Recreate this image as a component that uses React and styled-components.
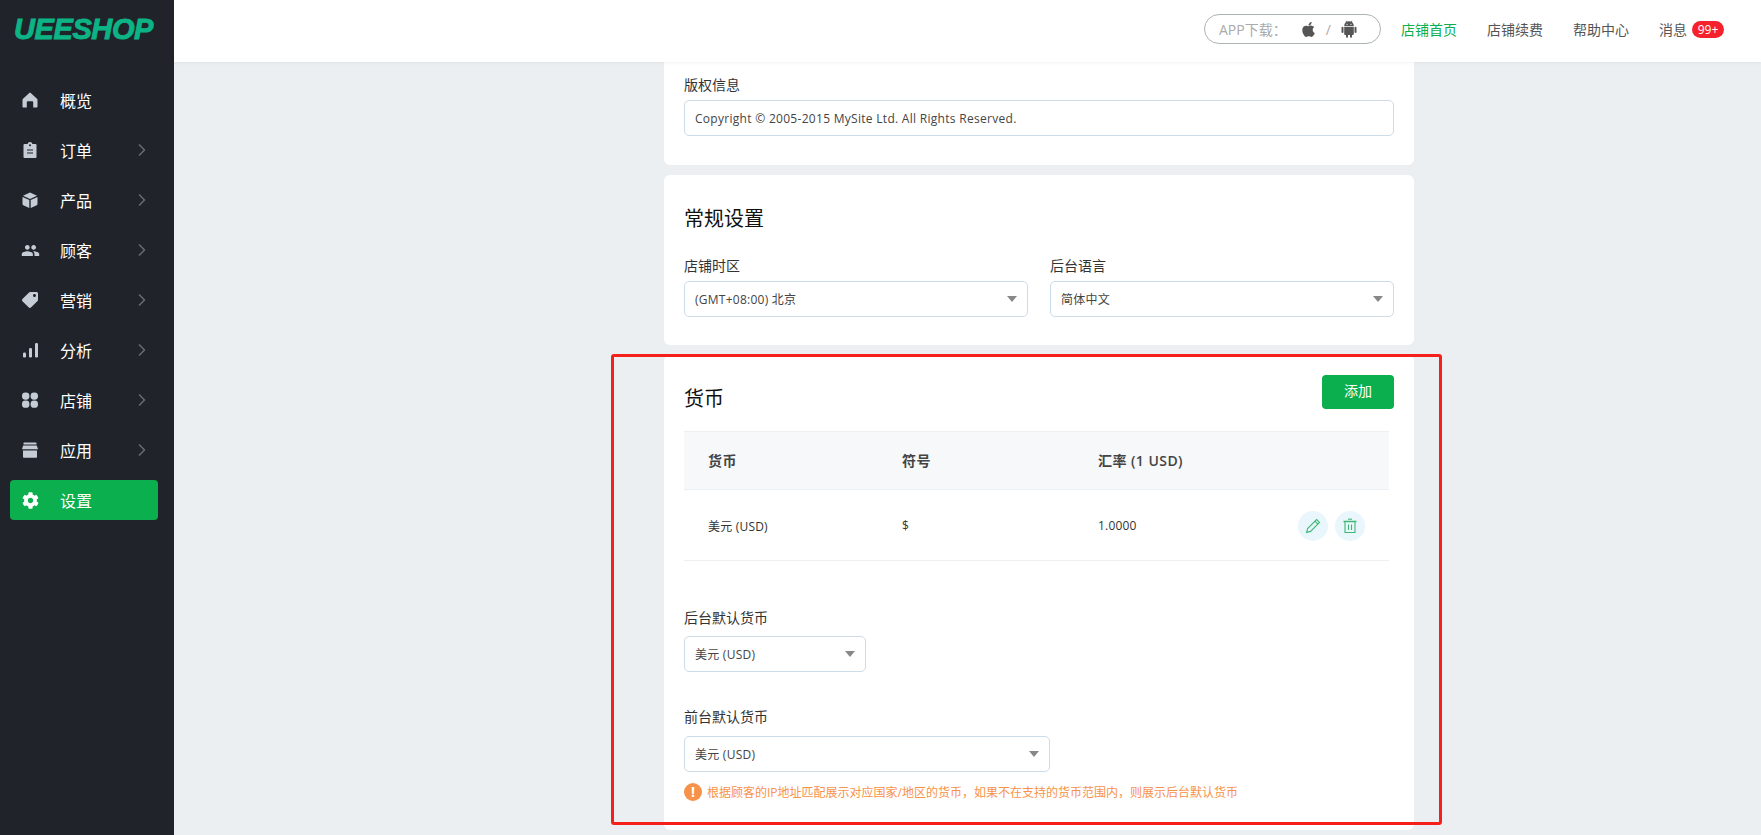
import styled, { createGlobalStyle } from "styled-components";
import { ChevronRight } from "lucide-react";
import { FaApple, FaCog, FaTag } from "react-icons/fa";
import { MdPeople } from "react-icons/md";

const GlobalStyle = createGlobalStyle`
  * { box-sizing: border-box; }
  html, body { margin: 0; height: 100%; }
  body {
    font-family: "Open Sans", "Noto Sans CJK SC", sans-serif;
    font-size: 12px;
    color: #333;
    background: #ebeff2;
    overflow: hidden;
  }
`;

const Layout = styled.div`
  display: flex;
  height: 100vh;
  position: relative;
  overflow: hidden;
`;

/* sidebar */
const Sidebar = styled.aside`
  width: 174px;
  flex: none;
  display: flex;
  flex-direction: column;
  background: #202329;
`;
const LogoBox = styled.div`
  height: 75px;
  padding: 12px 0 0 14px;
`;
const Logo = styled.div`
  font-family: "Liberation Sans", sans-serif;
  font-size: 29px;
  line-height: 34px;
  font-weight: 700;
  font-style: italic;
  letter-spacing: -0.4px;
  color: #0cb385;
  -webkit-text-stroke: 0.9px #0cb385;
`;
const NavItem = styled.div`
  display: flex;
  align-items: center;
  height: 40px;
  margin: 5px 16px 5px 10px;
  padding: 0 13px 0 12px;
  border-radius: 4px;
  background: ${(p) => (p.$active ? "#0baf4d" : "transparent")};
  color: #fff;
  font-size: 16px;
`;
const NavIcon = styled.span`
  width: 16px;
  height: 16px;
  display: flex;
  align-items: center;
  justify-content: center;
  color: ${(p) => (p.$active ? "#fff" : "#c5ccd6")};
  margin-right: 22px;
  svg {
    flex: none;
  }
`;
const NavText = styled.span`
  flex: 1;
`;
const Chevron = styled(ChevronRight)`
  color: #666b70;
  margin-right: -7px;
`;

/* top bar */
const Main = styled.div`
  flex: 1;
  min-width: 0;
  display: flex;
  flex-direction: column;
`;
const TopBar = styled.header`
  height: 62px;
  flex: none;
  display: flex;
  align-items: center;
  justify-content: flex-end;
  padding: 0 37px 4px 0;
  background: #fff;
  box-shadow: 0 1px 3px rgba(0, 0, 0, 0.05);
  position: relative;
  z-index: 1;
  font-size: 14px;
  color: #555;
`;
const AppPill = styled.div`
  width: 177px;
  height: 30px;
  display: flex;
  align-items: center;
  padding-left: 14px;
  border: 1px solid #adb3b5;
  border-radius: 15px;
  color: #aaa;
  margin-right: 19px;
`;
const PillIcons = styled.span`
  display: flex;
  align-items: center;
  margin-left: 13px;
  color: #555;
`;
const Slash = styled.span`
  margin: 0 10px 0 9px;
  color: #aaa;
  font-size: 14px;
`;
const TopLink = styled.span`
  margin-left: ${(p) => p.$gap || 30}px;
  color: ${(p) => (p.$active ? "#0baf4d" : "#555")};
`;
const Badge = styled.span`
  display: inline-block;
  width: 32px;
  height: 17px;
  margin-left: 5px;
  border-radius: 9px;
  background: #f5212d;
  color: #fff;
  font-size: 12px;
  line-height: 17px;
  text-align: center;
`;

/* cards */
const Content = styled.main`
  flex: 1;
  overflow: hidden;
  display: flex;
  flex-direction: column;
  gap: 10px;
  padding-left: 490px;
`;
const Card = styled.section`
  width: 750px;
  flex: none;
  background: #fff;
  border-radius: ${(p) => (p.$flush ? "0 0 6px 6px" : "6px")};
  padding: ${(p) => p.$top}px 20px ${(p) => p.$bottom}px;
`;
const Heading = styled.h2`
  margin: 10px 0 0;
  font-size: 20px;
  line-height: 28px;
  font-weight: 400;
  color: #111;
`;
const CardHead = styled.div`
  display: flex;
  justify-content: space-between;
  align-items: flex-start;
`;
const AddButton = styled.button`
  width: 72px;
  height: 34px;
  padding: 0 0 4px;
  border: 0;
  border-radius: 4px;
  background: #0baf4d;
  color: #fff;
  font: inherit;
  font-size: 14px;
`;
const Label = styled.div`
  font-size: 14px;
  line-height: 20px;
  color: #333;
  margin-bottom: ${(p) => p.$gap || 5}px;
`;
const Field = styled.div`
  margin-top: ${(p) => p.$top || 0}px;
  width: ${(p) => (p.$width ? p.$width + "px" : "auto")};
`;
const TextInput = styled.input`
  display: block;
  width: 100%;
  height: 36px;
  padding: 0 10px;
  border: 1px solid #ccdbe8;
  border-radius: 5px;
  font: inherit;
  font-size: 12px;
  letter-spacing: 0.29px;
  color: #444;
  outline: none;
`;
const SelectBox = styled.div`
  height: 36px;
  display: flex;
  align-items: center;
  justify-content: space-between;
  padding: 0 10px;
  border: 1px solid #ccdbe8;
  border-radius: 5px;
  font-size: 12px;
  letter-spacing: 0.25px;
  color: #444;
  background: #fff;
  &::after {
    content: "";
    border-left: 5px solid transparent;
    border-right: 5px solid transparent;
    border-top: 6px solid #888;
  }
`;
const TwoCols = styled.div`
  display: grid;
  grid-template-columns: 344px 344px;
  column-gap: 22px;
  margin-top: 23px;
`;

/* table */
const Table = styled.div`
  width: 705px;
  margin-top: 18px;
`;
const Row = styled.div`
  display: grid;
  grid-template-columns: 194px 196px 1fr auto;
  align-items: center;
  height: ${(p) => (p.$head ? 59 : 71)}px;
  padding: ${(p) => (p.$head ? "0 24px 2px" : "1px 24px 0")};
  border-bottom: 1px solid #edf0f3;
  letter-spacing: 0.2px;
  ${(p) =>
    p.$head &&
    `
    background: #f6f8fa;
    border-top: 1px solid #edf0f3;
    font-size: 14px;
    font-weight: 600;
    letter-spacing: 0.45px;
    color: #444;
  `}
`;
const Actions = styled.div`
  display: flex;
  gap: 7px;
`;
const RoundButton = styled.span`
  width: 30px;
  height: 30px;
  border-radius: 50%;
  background: #e9f6fc;
  display: flex;
  align-items: center;
  justify-content: center;
  color: #3fb873;
`;
const Hint = styled.div`
  display: flex;
  align-items: center;
  gap: 5px;
  margin-top: 11px;
  height: 18px;
  font-size: 12px;
  color: #f7924a;
`;
const HintIcon = styled.span`
  width: 18px;
  height: 18px;
  flex: none;
  border-radius: 50%;
  background: #f7924a;
  color: #fff;
  font-size: 14px;
  font-weight: 700;
  line-height: 18px;
  text-align: center;
`;

/* red annotation over the page */
const Annotation = styled.div`
  position: absolute;
  left: 611px;
  top: 354px;
  width: 831px;
  height: 471px;
  border: 3px solid #f5201a;
  border-radius: 3px;
  pointer-events: none;
`;

const HomeIcon = () => (
  <svg width="16" height="16" viewBox="0 0 16 16" fill="currentColor">
    <path d="M8 .8c.4 0 .7.100 1 .4l6 5.600c.4.400.5.700.5 1.200v6.500c0 .6-.4 1-1 1h-3.300V10.300a1 1 0 0 0-1-1H5.800a1 1 0 0 0-1 1v5.200H1.500c-.6 0-1-.4-1-1V8c0-.5.100-.8.500-1.200l6-5.600c.3-.3.600-.4 1-.4z" />
  </svg>
);
const AndroidIcon = () => (
  <svg width="16" height="18" viewBox="0 0 16 18" fill="currentColor">
    <path d="M3.200 6a4.800 4.800 0 0 1 9.600 0z" />
    <path d="M5 .8l1.200 2M11 .8L9.800 2.800" stroke="currentColor" strokeWidth=".8" />
    <path d="M3.200 6.800h9.600v7.200a1 1 0 0 1-1 1H4.200a1 1 0 0 1-1-1z" />
    <rect x="0.500" y="6.800" width="2" height="6.200" rx="1" />
    <rect x="13.500" y="6.800" width="2" height="6.200" rx="1" />
    <rect x="5" y="14" width="2" height="3.800" rx="1" />
    <rect x="9" y="14" width="2" height="3.800" rx="1" />
    <circle cx="6" cy="4.300" r=".6" fill="#fff" />
    <circle cx="10" cy="4.300" r=".6" fill="#fff" />
  </svg>
);
const ClipboardIcon = () => (
  <svg width="16" height="16" viewBox="0 0 16 16" fill="currentColor">
    <path d="M2.500 2h3a2.600 2.600 0 0 1 5 0h3a1 1 0 0 1 1 1V15a1 1 0 0 1-1 1h-11a1 1 0 0 1-1-1V3a1 1 0 0 1 1-1z" />
    <path d="M5 8h6M5 11h6" stroke="#202329" strokeWidth="1.200" />
    <circle cx="8" cy="3.200" r="1" fill="#202329" />
  </svg>
);
const BoxIcon = () => (
  <svg width="16" height="16" viewBox="0 0 16 16" fill="currentColor">
    <path d="M8 0.500l7 3.200-7 3.200-7-3.200z" />
    <path d="M.5 5l6.800 3.100V16L1.300 13.200a1.300 1.300 0 0 1-.8-1.100z" />
    <path d="M15.500 5L8.700 8.100V16l6-2.800a1.300 1.300 0 0 0 .8-1.100z" />
  </svg>
);
const BarsIcon = () => (
  <svg width="16" height="16" viewBox="0 0 16 16" fill="currentColor">
    <rect x="1" y="10.500" width="3" height="5" rx="1.200" />
    <rect x="7" y="6" width="3" height="9.500" rx="1.200" />
    <rect x="13" y="1" width="3" height="14.500" rx="1.200" />
  </svg>
);
const GridIcon = () => (
  <svg width="16" height="16" viewBox="0 0 16 16" fill="currentColor">
    <rect x="0" y="0.500" width="7.400" height="7.200" rx="3.400" />
    <rect x="8.600" y="0.500" width="7.400" height="7.200" rx="3.400" />
    <rect x="0" y="8.600" width="7.400" height="7.200" rx="3.400" />
    <rect x="8.600" y="8.600" width="7.400" height="7.200" rx="3.400" />
  </svg>
);
const StoreIcon = () => (
  <svg width="16" height="16" viewBox="0 0 16 16" fill="currentColor">
    <rect x="1.500" y="0.500" width="13" height="2" rx="0.500" />
    <path d="M1.200 3.500h13.600L16 7.200H0z" />
    <path d="M1 8.500h14V15a.8.800 0 0 1-.8.800H1.800A.8.800 0 0 1 1 15z" />
  </svg>
);
const PencilIcon = () => (
  <svg width="16" height="16" viewBox="0 0 16 16" fill="none" stroke="currentColor" strokeWidth="1.100">
    <path d="M11.600 1.500l2.900 2.900-9 9-3.900 1 1-3.900z" />
    <path d="M10 3.200l2.900 2.900" />
  </svg>
);
const TrashIcon = () => (
  <svg width="16" height="16" viewBox="0 0 16 16" fill="none" stroke="currentColor" strokeWidth="1.100">
    <path d="M1.500 3.500h13" strokeWidth="1.500" />
    <path d="M6 1.200h4" />
    <path d="M3 4v10.500h10V4" />
    <path d="M6.500 6.500v5.500M9.500 6.500v5.500" />
  </svg>
);

const menu = [
  { label: "概览", icon: <HomeIcon />, leaf: true },
  { label: "订单", icon: <ClipboardIcon /> },
  { label: "产品", icon: <BoxIcon /> },
  { label: "顾客", icon: <MdPeople size={19} /> },
  { label: "营销", icon: <FaTag size={16} style={{ transform: "scaleX(-1)" }} /> },
  { label: "分析", icon: <BarsIcon /> },
  { label: "店铺", icon: <GridIcon /> },
  { label: "应用", icon: <StoreIcon /> },
  { label: "设置", icon: <FaCog size={17} />, leaf: true, active: true },
];

export default function App() {
  return (
    <Layout>
      <GlobalStyle />
      <Sidebar>
        <LogoBox>
          <Logo>UEESHOP</Logo>
        </LogoBox>
        {menu.map((item) => (
          <NavItem key={item.label} $active={item.active}>
            <NavIcon $active={item.active}>{item.icon}</NavIcon>
            <NavText>{item.label}</NavText>
            {!item.leaf && <Chevron size={20} />}
          </NavItem>
        ))}
      </Sidebar>
      <Main>
        <TopBar>
          <AppPill>
            APP下载：
            <PillIcons>
              <FaApple size={17} />
              <Slash>/</Slash>
              <AndroidIcon />
            </PillIcons>
          </AppPill>
          <TopLink $active $gap={1}>店铺首页</TopLink>
          <TopLink>店铺续费</TopLink>
          <TopLink>帮助中心</TopLink>
          <TopLink>消息</TopLink>
          <Badge>99+</Badge>
        </TopBar>
        <Content>
          <Card $flush $top={13} $bottom={29}>
            <Label>版权信息</Label>
            <TextInput readOnly value="Copyright © 2005-2015 MySite Ltd. All Rights Reserved." />
          </Card>
          <Card $top={20} $bottom={28}>
            <Heading>常规设置</Heading>
            <TwoCols>
              <Field>
                <Label>店铺时区</Label>
                <SelectBox>(GMT+08:00) 北京</SelectBox>
              </Field>
              <Field>
                <Label>后台语言</Label>
                <SelectBox>简体中文</SelectBox>
              </Field>
            </TwoCols>
          </Card>
          <Card $top={20} $bottom={29}>
            <CardHead>
              <Heading>货币</Heading>
              <AddButton>添加</AddButton>
            </CardHead>
            <Table>
              <Row $head>
                <span>货币</span>
                <span>符号</span>
                <span>汇率 (1 USD)</span>
              </Row>
              <Row>
                <span>美元 (USD)</span>
                <span>$</span>
                <span>1.0000</span>
                <Actions>
                  <RoundButton><PencilIcon /></RoundButton>
                  <RoundButton><TrashIcon /></RoundButton>
                </Actions>
              </Row>
            </Table>
            <Field $top={47} $width={182}>
              <Label $gap={8}>后台默认货币</Label>
              <SelectBox>美元 (USD)</SelectBox>
            </Field>
            <Field $top={35} $width={366}>
              <Label $gap={9}>前台默认货币</Label>
              <SelectBox>美元 (USD)</SelectBox>
            </Field>
            <Hint>
              <HintIcon>!</HintIcon>
              根据顾客的IP地址匹配展示对应国家/地区的货币，如果不在支持的货币范围内，则展示后台默认货币
            </Hint>
          </Card>
        </Content>
      </Main>
      <Annotation />
    </Layout>
  );
}
